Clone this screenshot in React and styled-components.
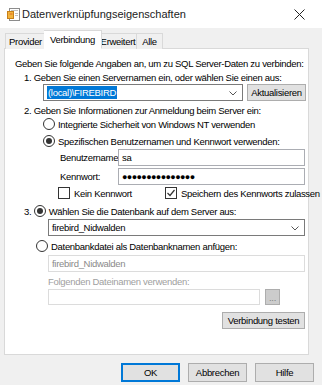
import React from "react";
import styled, { createGlobalStyle } from "styled-components";

const GlobalStyle = createGlobalStyle`
  html, body {
    margin: 0;
    padding: 0;
    background: #f0f0f0;
  }
  * { box-sizing: border-box; }
`;

const Window = styled.div`
  width: 322px;
  height: 385px;
  background: #f0f0f0;
  font-family: "Liberation Sans", Arial, sans-serif;
  font-size: 9.5px;
  letter-spacing: -0.3px;
  color: #000;
  display: flex;
  flex-direction: column;
  overflow: hidden;
`;

const TitleBar = styled.div`
  height: 28px;
  flex: none;
  background: #fff;
  display: flex;
  align-items: center;
  padding: 0 0 0 7px;
`;

const TitleText = styled.div`
  flex: 1;
  margin-left: 1px;
  font-family: "Liberation Sans", Arial, sans-serif;
  font-size: 11px;
  letter-spacing: 0;
  color: #222;
`;

const CloseBtn = styled.div`
  width: 46px;
  height: 28px;
  display: flex;
  align-items: center;
  justify-content: center;
`;

const Tabs = styled.div`
  display: flex;
  align-items: flex-end;
  height: 21px;
  flex: none;
  padding-left: 5px;
  position: relative;
  z-index: 1;
`;

const Tab = styled.div`
  width: ${({ w }) => w}px;
  height: ${({ active }) => (active ? "19px" : "16px")};
  margin: ${({ active }) => (active ? "0 -2px 0 -2px" : "0")};
  display: flex;
  justify-content: center;
  align-items: ${({ active }) => (active ? "flex-start" : "center")};
  padding-top: ${({ active }) => (active ? "3px" : "0")};
  background: ${({ active }) => (active ? "#fff" : "#f0f0f0")};
  border: 1px solid #d9d9d9;
  border-bottom: ${({ active }) => (active ? "1px solid #fff" : "none")};
  z-index: ${({ active }) => (active ? 2 : 1)};
  position: relative;
  & + & {
    border-left: ${({ active }) => (active ? "1px solid #d9d9d9" : "none")};
  }
`;

const Panel = styled.div`
  margin: -1px 13px 0 4px;
  height: 307px;
  flex: none;
  background: #fff;
  border: 1px solid #d9d9d9;
  padding: 7px 0 0 10px;
  display: flex;
  flex-direction: column;
`;

const Line = styled.div`
  height: ${({ h }) => h || 14}px;
  margin-top: ${({ mt }) => mt || 0}px;
  margin-left: ${({ ml }) => ml || 0}px;
  flex: none;
  display: flex;
  align-items: center;
  color: ${({ disabled }) => (disabled ? "#a0a0a0" : "#000")};
  white-space: nowrap;
`;

const Field = styled.div`
  height: ${({ h }) => h || 17}px;
  width: ${({ w }) => w}px;
  flex: none;
  border: 1px solid ${({ disabled, combo }) => (disabled ? "#dcdcdc" : combo ? "#7a7a7a" : "#abadb3")};
  background: #fff;
  display: flex;
  align-items: center;
  padding-left: 3px;
  color: ${({ disabled }) => (disabled ? "#8a8a8a" : "#000")};
  position: relative;
`;

const Selected = styled.span`
  background: #0078d7;
  color: #fff;
  padding: 1px 1px;
`;

const Chevron = styled.svg`
  position: absolute;
  right: 5px;
  top: 6px;
`;

const Button = styled.div`
  height: ${({ h }) => h || 17}px;
  width: ${({ w }) => w}px;
  margin-left: ${({ ml }) => ml || 0}px;
  background: ${({ disabled }) => (disabled ? "#cccccc" : "#e1e1e1")};
  border: ${({ primary }) => (primary ? "2px solid #0078d7" : "1px solid #adadad")};
  display: flex;
  align-items: center;
  justify-content: center;
  color: ${({ disabled }) => (disabled ? "#838383" : "#000")};
  flex: none;
`;

const Radio = styled.span`
  width: 12px;
  height: 12px;
  border-radius: 50%;
  border: 1px solid #333;
  background: #fff;
  margin-right: 3px;
  display: inline-flex;
  align-items: center;
  justify-content: center;
  flex: none;
  &::after {
    content: "";
    width: 6px;
    height: 6px;
    border-radius: 50%;
    background: ${({ checked }) => (checked ? "#333" : "transparent")};
  }
`;

const Check = styled.span`
  width: 12px;
  height: 12px;
  border: 1px solid #333;
  background: #fff;
  margin-right: 4px;
  display: inline-flex;
  align-items: center;
  justify-content: center;
  flex: none;
`;

const FieldLabel = styled.span`
  width: ${({ w }) => w}px;
  flex: none;
`;

const Dots = styled.span`
  font-size: 9px;
  letter-spacing: -0.6px;
  font-weight: bold;
`;

const Footer = styled.div`
  display: flex;
  justify-content: flex-end;
  gap: 8px;
  padding: 8px 8px 0 0;
`;

const TitleIcon = () => (
  <svg width="14" height="14" viewBox="0 0 14 14">
    <rect x="2.5" y="1.5" width="10" height="12" fill="#fff" stroke="#8c8c8c" />
    <rect x="0.5" y="4.5" width="6" height="7" fill="#f2b43c" stroke="#c77f1a" />
    <rect x="4" y="3" width="7" height="1" fill="#c0c0c0" />
    <rect x="8" y="6" width="3" height="1" fill="#c0c0c0" />
    <rect x="8" y="8" width="3" height="1" fill="#c0c0c0" />
    <rect x="2.5" y="6.5" width="3" height="1" fill="#e46b23" />
  </svg>
);

const ChevronDown = () => (
  <Chevron width="8" height="5" viewBox="0 0 8 5">
    <path d="M0.5 0.5 L4 4 L7.5 0.5" fill="none" stroke="#555" strokeWidth="1" />
  </Chevron>
);

const App = () => {
  return (
    <>
      <GlobalStyle />
      <Window>
        <TitleBar>
          <TitleIcon />
          <TitleText>Datenverknüpfungseigenschaften</TitleText>
          <CloseBtn>
            <svg width="11" height="11" viewBox="0 0 11 11">
              <path d="M0.5 0.5 L10.5 10.5 M10.5 0.5 L0.5 10.5" stroke="#222" strokeWidth="1" />
            </svg>
          </CloseBtn>
        </TitleBar>
        <Tabs>
          <Tab w={41}>Provider</Tab>
          <Tab w={58} active>Verbindung</Tab>
          <Tab w={37}>Erweitert</Tab>
          <Tab w={26}>Alle</Tab>
        </Tabs>
        <Panel>
          <Line>Geben Sie folgende Angaben an, um zu SQL Server-Daten zu verbinden:</Line>
          <Line ml={9}>1. Geben Sie einen Servernamen ein, oder wählen Sie einen aus:</Line>
          <Line h={17} ml={28}>
            <Field w={200} combo>
              <Selected>(local)\FIREBIRD</Selected>
              <ChevronDown />
            </Field>
            <Button w={59} ml={4}>Aktualisieren</Button>
          </Line>
          <Line mt={2} ml={9}>2. Geben Sie Informationen zur Anmeldung beim Server ein:</Line>
          <Line ml={28}>
            <Radio />
            Integrierte Sicherheit von Windows NT verwenden
          </Line>
          <Line mt={3} ml={28}>
            <Radio checked />
            Spezifischen Benutzernamen und Kennwort verwenden:
          </Line>
          <Line h={17} mt={1} ml={45}>
            <FieldLabel w={58}>Benutzername:</FieldLabel>
            <Field w={187}>sa</Field>
          </Line>
          <Line h={17} mt={2} ml={45}>
            <FieldLabel w={58}>Kennwort:</FieldLabel>
            <Field w={187}>
              <Dots>●●●●●●●●●●●●●●●</Dots>
            </Field>
          </Line>
          <Line mt={1} ml={43}>
            <Check />
            <FieldLabel w={91}>Kein Kennwort</FieldLabel>
            <Check>
              <svg width="10" height="10" viewBox="0 0 10 10">
                <path d="M1.5 5 L4 7.5 L8.5 2" fill="none" stroke="#333" strokeWidth="1.2" />
              </svg>
            </Check>
            Speichern des Kennworts zulassen
          </Line>
          <Line mt={4} ml={9}>
            3.&nbsp;
            <Radio checked />
            Wählen Sie die Datenbank auf dem Server aus:
          </Line>
          <Line h={17} mt={1} ml={33}>
            <Field w={257} combo>
              firebird_Nidwalden
              <ChevronDown />
            </Field>
          </Line>
          <Line mt={3} ml={21}>
            <Radio />
            Datenbankdatei als Datenbanknamen anfügen:
          </Line>
          <Line h={17} mt={2} ml={33}>
            <Field w={257} disabled>firebird_Nidwalden</Field>
          </Line>
          <Line mt={2} ml={33} disabled>Folgenden Dateinamen verwenden:</Line>
          <Line h={16} mt={1} ml={33}>
            <Field w={212} h={16} disabled />
            <Button w={15} h={16} ml={5} disabled>...</Button>
          </Line>
          <Line h={17} mt={7} ml={207}>
            <Button w={83}>Verbindung testen</Button>
          </Line>
        </Panel>
        <Footer>
          <Button w={59} h={19} primary>OK</Button>
          <Button w={59} h={19}>Abbrechen</Button>
          <Button w={59} h={19}>Hilfe</Button>
        </Footer>
      </Window>
    </>
  );
};

export default App;
